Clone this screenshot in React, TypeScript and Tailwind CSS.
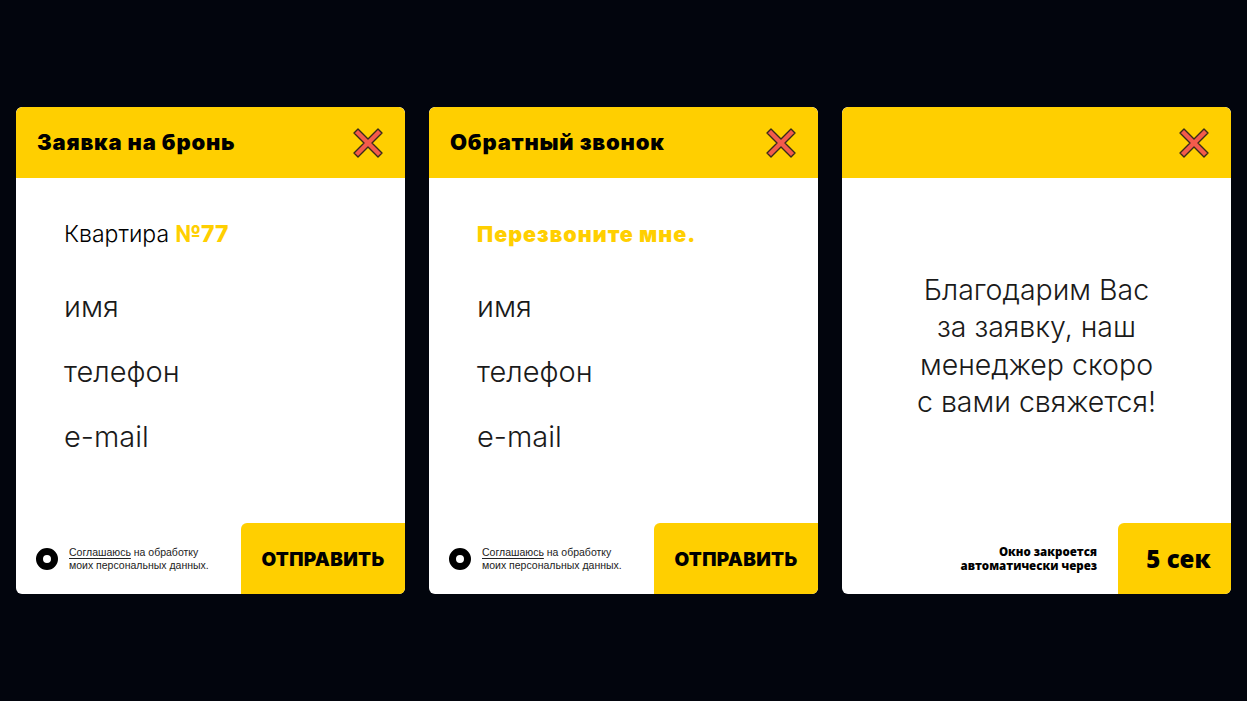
import React from 'react';

const YELLOW = 'bg-[#ffcf00]';

const CloseIcon: React.FC = () => (
  <svg width="34" height="34" viewBox="0 0 34 34" aria-hidden="true">
    <path
      d="M7 3 L17 13 L27 3 L31 7 L21 17 L31 27 L27 31 L17 21 L7 31 L3 27 L13 17 L3 7 Z"
      fill="#f35b4c"
      stroke="#3a2a1a"
      strokeWidth="1.4"
      strokeLinejoin="round"
    />
  </svg>
);

const Header: React.FC<{ title?: string }> = ({ title }) => (
  <div className={`${YELLOW} h-[71px] flex items-center justify-between pl-[21px] pr-[20px] rounded-t-[6px]`}>
    <h2 className="text-[22px] font-black tracking-[0.8px] text-black font-['Inter',sans-serif]">{title}</h2>
    <CloseIcon />
  </div>
);

const Fields: React.FC = () => (
  <div className="flex flex-col gap-[33px] mt-[43px] text-[29px] font-light leading-[32px] text-[#1a1a1a] font-['Inter',sans-serif]">
    <span>имя</span>
    <span>телефон</span>
    <span>e-mail</span>
  </div>
);

const Agreement: React.FC = () => (
  <div className="flex flex-1 items-center gap-[11px] pl-[20px]">
    <span className="w-[22px] h-[22px] rounded-full border-[7px] border-black bg-white shrink-0" />
    <p className="text-[10.5px] leading-[13px] text-[#222] font-['Liberation_Sans',Arial,sans-serif]">
      <span className="underline underline-offset-2">Соглашаюсь</span> на обработку
      <br />
      моих персональных данных.
    </p>
  </div>
);

const SendButton: React.FC = () => (
  <button className={`${YELLOW} w-[164px] h-[71px] rounded-tl-[6px] flex items-center justify-center pt-[3px] text-[19px] font-black tracking-[0.3px] text-black font-['Inter',sans-serif]`}>
    ОТПРАВИТЬ
  </button>
);

const Card: React.FC<{ children: React.ReactNode }> = ({ children }) => (
  <div className="w-[389px] h-[487px] bg-white rounded-[6px] flex flex-col overflow-hidden">{children}</div>
);

export default function App() {
  return (
    <div className="w-full h-screen bg-[#02050d] flex items-center justify-center gap-[24px]">
      <Card>
        <Header title="Заявка на бронь" />
        <div className="flex-1 pl-[48px] pt-[42px]">
          <div className="text-[23px] leading-[28px] text-black font-['Inter',sans-serif] font-light">
            Квартира <span className="font-extrabold text-[#ffcf00]">№77</span>
          </div>
          <Fields />
        </div>
        <div className="flex items-center h-[71px]">
          <Agreement />
          <SendButton />
        </div>
      </Card>

      <Card>
        <Header title="Обратный звонок" />
        <div className="flex-1 pl-[48px] pt-[42px]">
          <div className="text-[21.5px] leading-[28px] font-black tracking-[1px] text-[#ffcf00] font-['Inter',sans-serif]">
            Перезвоните мне.
          </div>
          <Fields />
        </div>
        <div className="flex items-center h-[71px]">
          <Agreement />
          <SendButton />
        </div>
      </Card>

      <Card>
        <Header />
        <div className="flex-1 flex items-center justify-center pb-[10px]">
          <p className="text-center text-[28.5px] leading-[37.5px] font-light text-[#1a1a1a] font-['Inter',sans-serif]">
            Благодарим Вас
            <br />
            за заявку, наш
            <br />
            менеджер скоро
            <br />с вами свяжется!
          </p>
        </div>
        <div className="flex items-center h-[71px]">
          <p className="flex-1 text-right pr-[21px] text-[11.5px] leading-[14px] font-extrabold text-black font-['Open_Sans',sans-serif]">
            Окно закроется
            <br />
            автоматически через
          </p>
          <div className={`${YELLOW} w-[113px] h-[71px] rounded-tl-[6px] flex items-center justify-center pl-[8px] text-[24px] font-extrabold text-black font-['Open_Sans',sans-serif]`}>
            5 сек
          </div>
        </div>
      </Card>
    </div>
  );
}
